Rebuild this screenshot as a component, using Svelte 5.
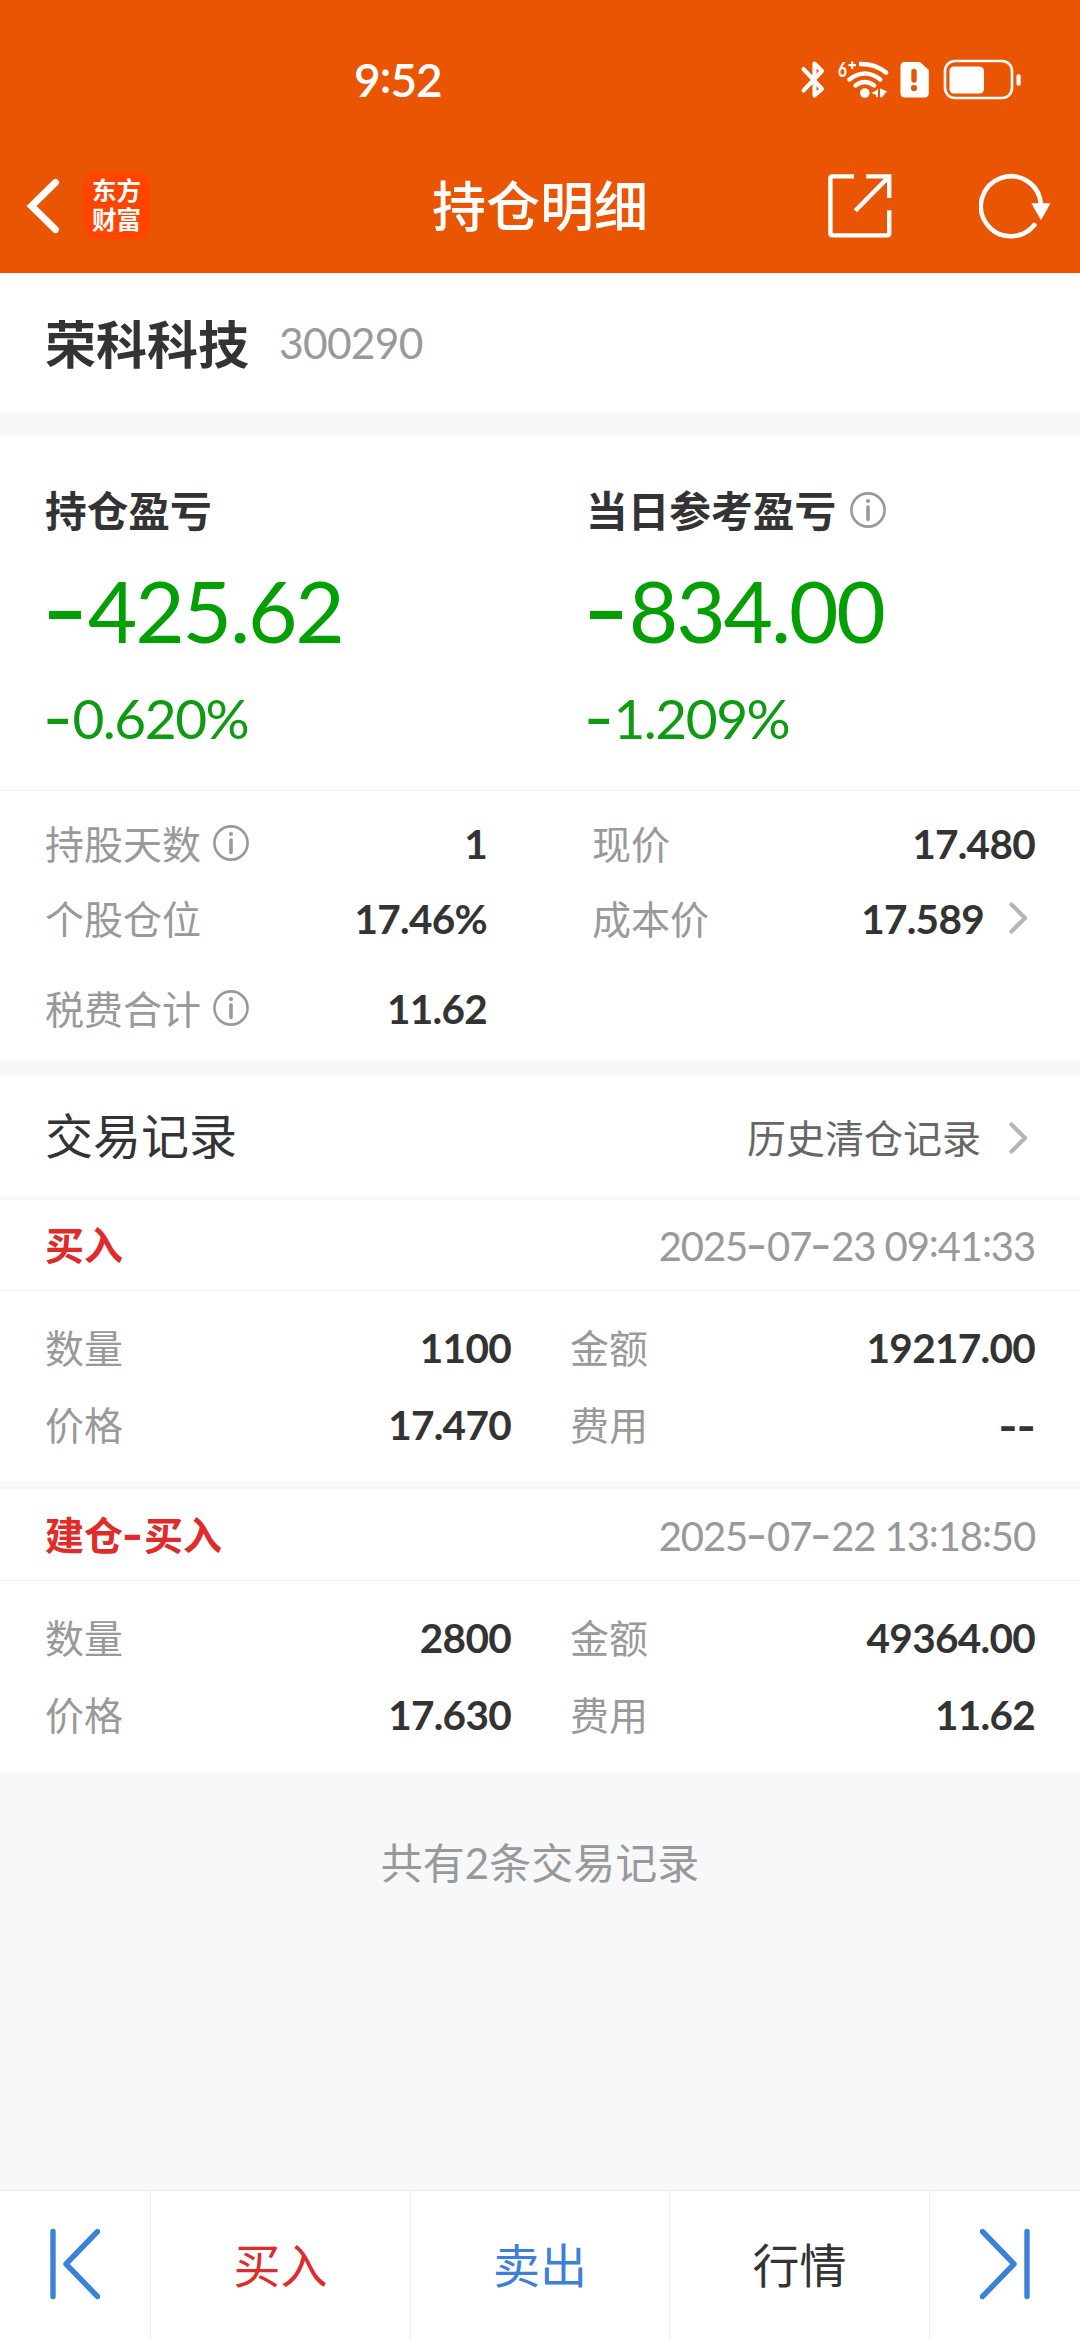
<script>
  const summary = [
    { title: '持仓盈亏', info: false, amount: '-425.62', percent: '-0.620%' },
    { title: '当日参考盈亏', info: true, amount: '-834.00', percent: '-1.209%' }
  ];

  const details = [
    { label: '持股天数', info: true, value: '1' },
    { label: '现价', value: '17.480' },
    { label: '个股仓位', value: '17.46%' },
    { label: '成本价', value: '17.589', link: true },
    { label: '税费合计', info: true, value: '11.62' }
  ];

  const records = [
    {
      type: '买入',
      time: '2025-07-23 09:41:33',
      fields: [['数量', '1100'], ['金额', '19217.00'], ['价格', '17.470'], ['费用', '--']]
    },
    {
      type: '建仓-买入',
      time: '2025-07-22 13:18:50',
      fields: [['数量', '2800'], ['金额', '49364.00'], ['价格', '17.630'], ['费用', '11.62']]
    }
  ];

  const pieces = (text) => text.split(/([-:])/).filter(Boolean);
</script>

{#snippet num(text)}{#each pieces(text) as p}{#if p === '-'}<span class="dash">-</span>{:else if p === ':'}<span class="colon">:</span>{:else}{p}{/if}{/each}{/snippet}

{#snippet infoIcon()}
  <svg class="info" viewBox="0 0 36 36" width="36" height="36">
    <circle cx="18" cy="18" r="16.6" fill="none" stroke="#999" stroke-width="2.6" />
    <circle cx="18" cy="9" r="2.1" fill="#999" />
    <path d="M18 15V27.5" stroke="#999" stroke-width="3.6" stroke-linecap="round" />
  </svg>
{/snippet}

{#snippet chevron()}
  <svg class="chevron" viewBox="0 0 20 34" width="20" height="34">
    <path d="M3.5 3.5L17 17L3.5 30.5" fill="none" stroke="#b5b5b5" stroke-width="4.2" stroke-linecap="round" stroke-linejoin="round" />
  </svg>
{/snippet}

<div class="screen">
  <header>
    <div class="status">
      <div class="clock">9<span class="colon">:</span>52</div>
      <svg class="status-icons" viewBox="0 -8 222 58" width="222" height="58">
        <g fill="none" stroke="#fff" stroke-width="4.1" stroke-linecap="round" stroke-linejoin="round">
          <path d="M3.5 10L22 30L14.5 36.5V4.5L22 12L3.5 31.5" />
          <path d="M55.5 26.5Q64.8 19.5 74.2 26.5M49.3 20.5Q64.8 8.5 80.3 20.5" stroke-width="4.4" />
          <path d="M59 5Q75 4.3 86.3 13.8" stroke-width="4.4" stroke-linecap="butt" />
          <path d="M86.1 13.6L86.2 13.7" stroke-width="4.4" />
        </g>
        <circle cx="64.8" cy="34" r="4.8" fill="#fff" />
        <path d="M78 29.5V38.3H76.3V36.3L71.5 34L76.3 31.5ZM80 29.5L87 32.2L82 38.3H80Z" fill="#fff" />
        <text x="38" y="18" class="wifi-gen" textLength="9" lengthAdjust="spacingAndGlyphs">6</text>
        <path d="M48.5 6.2H56M52.2 2.5V10" stroke="#fff" stroke-width="2.2" />
        <path d="M104.5 3H120L128.8 11V33.5Q128.8 38.5 124.3 38.5H105Q100.5 38.5 100.5 34V7.5Q100.5 3 104.5 3Z" fill="#fff" />
        <path d="M114 12.5V21" stroke="#ea5504" stroke-width="5.4" stroke-linecap="round" />
        <circle cx="114" cy="29" r="3.1" fill="#ea5504" />
        <rect x="145" y="2" width="67" height="37" rx="10" fill="none" stroke="#fff" stroke-width="2.6" />
        <rect x="149.5" y="7.5" width="34.5" height="27" rx="4.5" fill="#fff" />
        <rect x="216.5" y="15.2" width="4.2" height="11.6" rx="2" fill="#fff" />
      </svg>
    </div>
    <div class="nav">
      <svg class="back" viewBox="0 0 34 56" width="34" height="56">
        <path d="M29.5 4.5L5.5 28L29.5 51.5" fill="none" stroke="#fff" stroke-width="7" stroke-linecap="round" stroke-linejoin="miter" />
      </svg>
      <div class="logo"><span>东方</span><span>财富</span></div>
      <h1>持仓明细</h1>
      <svg class="share" viewBox="0 0 64 64" width="64" height="64">
        <g fill="none" stroke="#fff" stroke-width="4.4">
          <path d="M26 2.4H4.5Q2.4 2.4 2.4 4.5V59.5Q2.4 61.4 4.5 61.4H59.3Q61.2 61.4 61.2 59.3V36.3" />
          <path d="M38.2 2.4H61.2V24M61 2.6L27.3 36.8" />
        </g>
      </svg>
      <svg class="refresh" viewBox="0 0 72 66" width="72" height="66">
        <path d="M55.3 52A30 30 0 1 1 61.8 31" fill="none" stroke="#fff" stroke-width="4.6" stroke-linecap="round" />
        <path d="M52.3 30.3H71.5L62 47.3Z" fill="#fff" />
      </svg>
    </div>
  </header>

  <section class="stock">
    <h2>荣科科技</h2>
    <span class="code">300290</span>
  </section>

  <section class="summary">
    {#each summary as s}
      <div class="metric">
        <div class="metric-title">{s.title}{#if s.info}{@render infoIcon()}{/if}</div>
        <div class="amount">{@render num(s.amount)}</div>
        <div class="percent">{@render num(s.percent)}</div>
      </div>
    {/each}
  </section>

  <section class="details">
    {#each details as d}
      <div class="detail">
        <span class="label">{d.label}</span>
        {#if d.info}{@render infoIcon()}{/if}
        <b class="value">{@render num(d.value)}</b>
        {#if d.link}{@render chevron()}{/if}
      </div>
    {/each}
  </section>

  <section class="records-head">
    <h3>交易记录</h3>
    <span class="history">历史清仓记录</span>
    {@render chevron()}
  </section>

  {#each records as r}
    <section class="record">
      <div class="record-head">
        <b class="type">{@render num(r.type)}</b>
        <span class="time">{@render num(r.time)}</span>
      </div>
      <div class="fields">
        {#each r.fields as [label, value]}
          <div class="field">
            <span class="label">{label}</span>
            <b class="value">{@render num(value)}</b>
          </div>
        {/each}
      </div>
    </section>
  {/each}

  <p class="total">共有2条交易记录</p>

  <footer>
    <div class="cell">
      <svg viewBox="0 0 50 74" width="50" height="74">
        <path d="M3 4.5V69.5M47.5 4.5L16 37L47.5 69.5" fill="none" stroke="#3c80d9" stroke-width="5.4" stroke-linecap="round" stroke-linejoin="round" />
      </svg>
    </div>
    <div class="cell buy">买入</div>
    <div class="cell sell">卖出</div>
    <div class="cell">行情</div>
    <div class="cell">
      <svg viewBox="0 0 50 74" width="50" height="74">
        <path d="M47 4.5V69.5M2.5 4.5L34 37L2.5 69.5" fill="none" stroke="#3c80d9" stroke-width="5.4" stroke-linecap="round" stroke-linejoin="round" />
      </svg>
    </div>
  </footer>
</div>

<style>
  :global(body) {
    margin: 0;
    background: #f6f8fa;
  }

  .screen {
    display: flex;
    flex-direction: column;
    width: 1080px;
    height: 2340px;
    overflow: hidden;
    background: #f6f8fa;
    color: #333;
    font-family: Lato, 'Noto Sans CJK SC', sans-serif;
    font-size: 39px;
    line-height: 1;
  }

  h1, h2, h3, p {
    margin: 0;
  }

  svg {
    display: block;
    flex: none;
  }

  section {
    box-sizing: border-box;
    flex: none;
    background: #fff;
  }

  .dash {
    margin-left: -0.03em;
    margin-right: 0.02em;
    font-family: Inter, sans-serif;
    font-size: 1.17em;
    line-height: 0;
    vertical-align: -0.03em;
  }

  .value .dash {
    margin: 0;
    font-size: 1em;
  }

  .colon {
    line-height: 0;
    vertical-align: 0.09em;
  }

  header {
    flex: none;
    height: 273px;
    background: #ea5504;
    color: #fff;
  }

  .status {
    display: flex;
    align-items: center;
    justify-content: space-between;
    height: 159px;
    padding: 0 58px 0 354px;
  }

  .clock {
    font-size: 46px;
    font-weight: 600;
    letter-spacing: -1px;
  }

  .wifi-gen {
    fill: #fff;
    font-size: 21.5px;
    font-weight: 700;
  }

  .nav {
    display: grid;
    grid-template-columns: 34px 91px 677px 64px 159px;
    align-items: center;
    height: 93px;
    padding: 0 29px 0 26px;
  }

  .logo {
    display: flex;
    flex-direction: column;
    align-items: center;
    justify-content: center;
    gap: 5px;
    width: 67px;
    height: 67px;
    margin-left: 23px;
    border-radius: 14px;
    background: #ff4400;
    font-size: 24.5px;
    font-weight: 700;
    line-height: 24px;
  }

  h1 {
    padding: 2px 0 0 281px;
    font-size: 54px;
    font-weight: 500;
    line-height: 60px;
  }

  .refresh {
    justify-self: end;
  }

  .stock {
    display: flex;
    align-items: center;
    height: 140px;
    padding-left: 45px;
  }

  h2 {
    padding-top: 3px;
    font-size: 51px;
    font-weight: 700;
  }

  .code {
    margin-left: 30px;
    padding-top: 1px;
    color: #999;
    font-size: 42.5px;
    letter-spacing: -0.7px;
  }

  .summary {
    display: grid;
    grid-template-columns: 541px 1fr;
    height: 353px;
    margin-top: 24px;
    padding: 48px 0 0 45px;
  }

  .metric-title {
    display: flex;
    align-items: center;
    height: 54px;
    font-size: 41.7px;
    font-weight: 700;
  }

  .metric-title .info {
    margin: -4px 0 0 14px;
  }

  .amount {
    height: 90px;
    margin-top: 26px;
    color: #049f05;
    font-size: 85.5px;
    line-height: 90px;
    letter-spacing: -2.2px;
  }

  .percent {
    height: 60px;
    margin-top: 33px;
    color: #0e9b12;
    font-size: 55px;
    line-height: 60px;
    letter-spacing: -1.5px;
  }

  .details {
    display: grid;
    grid-template-columns: 442px 443px;
    grid-template-rows: 75px 75px 105px;
    column-gap: 105px;
    height: 271px;
    padding: 14px 45px 0;
    border-top: 1px solid #f2f3f5;
  }

  .detail,
  .field {
    display: flex;
    align-items: center;
  }

  .label {
    padding-top: 4px;
    color: #999;
  }

  .detail .info {
    margin-left: 12px;
  }

  .value {
    margin-left: auto;
    padding-top: 4px;
    font-size: 40.5px;
    font-weight: 700;
    letter-spacing: -0.7px;
  }

  .detail .chevron {
    margin: 0 7px 0 24px;
  }

  .records-head {
    display: flex;
    align-items: center;
    height: 120px;
    margin-top: 15px;
    padding: 4px 52px 0 45px;
  }

  h3 {
    padding-bottom: 5px;
    font-size: 48px;
    font-weight: 400;
  }

  .history {
    margin-left: auto;
    padding-top: 1px;
    color: #666;
  }

  .records-head .chevron {
    margin-left: 27px;
  }

  .record {
    height: 281px;
    margin-top: 4px;
  }

  .record + .record {
    margin-top: 9px;
  }

  .record-head {
    display: flex;
    align-items: center;
    justify-content: space-between;
    height: 90px;
    padding: 0 45px;
    border-bottom: 1px solid #f2f3f5;
  }

  .type {
    color: #e12a2a;
  }

  .time {
    padding-top: 2px;
    color: #999;
    font-size: 40px;
    letter-spacing: -1.1px;
  }

  .fields {
    display: grid;
    grid-template-columns: 466px 465px;
    grid-template-rows: 77px 77px;
    column-gap: 59px;
    padding: 17px 45px 0;
  }

  .total {
    margin-top: 71px;
    color: #999;
    font-size: 42px;
    text-align: center;
  }

  footer {
    display: grid;
    grid-template-columns: 150px 260px 259px 260px 151px;
    height: 149px;
    margin-top: auto;
    border-top: 1px solid #e8eaed;
    background: #fff;
    font-size: 47px;
  }

  .cell {
    display: flex;
    align-items: center;
    justify-content: center;
  }

  .cell svg {
    margin-bottom: 4px;
  }

  .cell + .cell {
    border-left: 1px solid #ededef;
  }

  .buy {
    color: #e12a2a;
  }

  .sell {
    color: #3c80d9;
  }
</style>
